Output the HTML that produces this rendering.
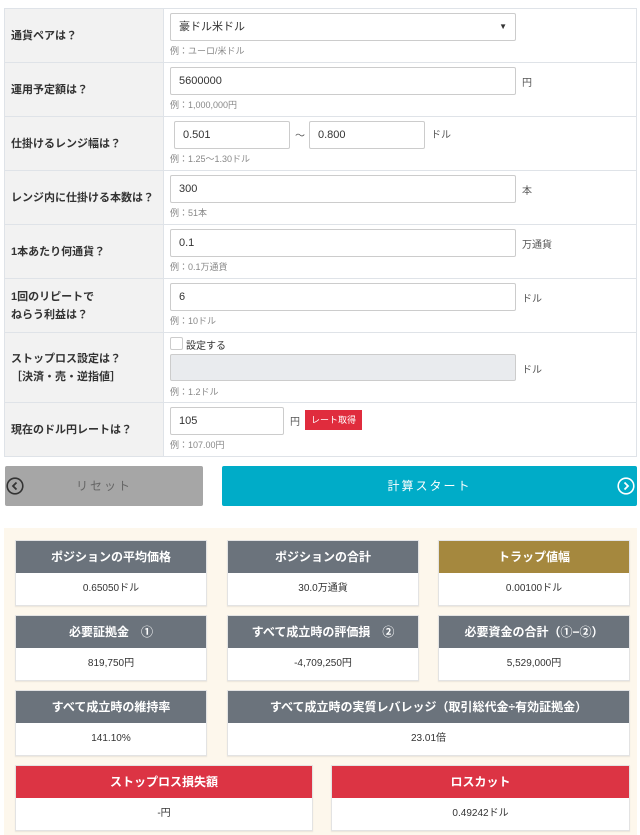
<!DOCTYPE html>
<html><head><meta charset="utf-8"><style>
*{box-sizing:border-box;margin:0;padding:0}
body{width:640px;height:835px;background:#fff;font-family:"Liberation Sans","Noto Sans CJK JP",sans-serif;color:#333;position:relative;overflow:hidden}
.a{position:absolute}
.row{position:absolute;left:4px;width:633px;border:1px solid #dfe3e8;border-bottom:none}
.lab{position:absolute;left:0;top:0;bottom:0;width:159px;background:#f2f2f2;border-right:1px solid #dfe3e8;font-size:11px;font-weight:bold;color:#333;padding-left:6px;display:flex;align-items:center;line-height:18px}
.inp{position:absolute;height:28px;border:1px solid #ccc;border-radius:2px;background:#fff;font-size:11px;padding-left:8px;line-height:26px;color:#333}
.hint{position:absolute;font-size:9px;color:#888}
.unit{position:absolute;font-size:10px;color:#555}
.bx{position:absolute;border:1px solid #e3e3e3;background:#fff;box-shadow:0 1px 1px rgba(0,0,0,.08)}
.bh{height:32px;background:#6b737c;color:#fff;font-weight:bold;font-size:12px;text-align:center;line-height:32px}
.bv{height:32px;font-size:10px;text-align:center;line-height:32px;color:#333}
</style></head><body>
<div class="row" style="top:8px;height:54px"><div class="lab">通貨ペアは？</div></div>
<div class="row" style="top:62px;height:54px"><div class="lab">運用予定額は？</div></div>
<div class="row" style="top:116px;height:54px"><div class="lab">仕掛けるレンジ幅は？</div></div>
<div class="row" style="top:170px;height:54px"><div class="lab">レンジ内に仕掛ける本数は？</div></div>
<div class="row" style="top:224px;height:54px"><div class="lab">1本あたり何通貨？</div></div>
<div class="row" style="top:278px;height:54px"><div class="lab">1回のリピートで<br>ねらう利益は？</div></div>
<div class="row" style="top:332px;height:70px"><div class="lab">ストップロス設定は？<br>［決済・売・逆指値］</div></div>
<div class="row" style="top:402px;height:55px;border-bottom:1px solid #dfe3e8"><div class="lab">現在のドル円レートは？</div></div>

<div class="inp" style="left:170px;top:13px;width:346px">豪ドル米ドル<span style="position:absolute;right:8px;font-size:8px">▼</span></div>
<div class="hint" style="left:170px;top:44px">例：ユーロ/米ドル</div>
<div class="inp" style="left:170px;top:67px;width:346px">5600000</div><div class="unit" style="left:522px;top:74px">円</div>
<div class="hint" style="left:170px;top:98px">例：1,000,000円</div>
<div class="inp" style="left:174px;top:121px;width:116px">0.501</div><div class="unit" style="left:295px;top:127px">〜</div>
<div class="inp" style="left:309px;top:121px;width:116px">0.800</div><div class="unit" style="left:431px;top:126px">ドル</div>
<div class="hint" style="left:170px;top:152px">例：1.25〜1.30ドル</div>
<div class="inp" style="left:170px;top:175px;width:346px">300</div><div class="unit" style="left:522px;top:182px">本</div>
<div class="hint" style="left:170px;top:206px">例：51本</div>
<div class="inp" style="left:170px;top:229px;width:346px">0.1</div><div class="unit" style="left:522px;top:236px">万通貨</div>
<div class="hint" style="left:170px;top:260px">例：0.1万通貨</div>
<div class="inp" style="left:170px;top:283px;width:346px">6</div><div class="unit" style="left:522px;top:290px">ドル</div>
<div class="hint" style="left:170px;top:314px">例：10ドル</div>
<div class="a" style="left:170px;top:337px;width:13px;height:13px;border:1px solid #ccc;border-radius:2px"></div>
<div class="a" style="left:186px;top:337px;font-size:10px">設定する</div>
<div class="inp" style="left:170px;top:354px;width:346px;background:#e9ebee;height:27px"></div><div class="unit" style="left:522px;top:361px">ドル</div>
<div class="hint" style="left:170px;top:385px">例：1.2ドル</div>
<div class="inp" style="left:170px;top:407px;width:114px">105</div><div class="unit" style="left:290px;top:413px">円</div>
<div class="a" style="left:305px;top:410px;width:57px;height:20px;background:#e02c3d;color:#fff;font-size:9px;text-align:center;line-height:20px">レート取得</div>
<div class="hint" style="left:170px;top:438px">例：107.00円</div>

<div class="a" style="left:5px;top:466px;width:198px;height:40px;background:#a6a6a6;border-radius:2px;color:#666;font-size:12px;text-align:center;line-height:40px;letter-spacing:2px">リセット
<svg class="a" style="left:1px;top:11px" width="18" height="18" viewBox="0 0 18 18"><circle cx="9" cy="9" r="7.8" fill="none" stroke="#333" stroke-width="1.6"/><path d="M10.5 5.5 L7 9 L10.5 12.5" fill="none" stroke="#333" stroke-width="1.8"/></svg></div>
<div class="a" style="left:222px;top:466px;width:415px;height:40px;background:#00acc8;border-radius:2px;color:#fff;font-size:12px;text-align:center;line-height:40px;letter-spacing:2px">計算スタート
<svg class="a" style="left:395px;top:11px" width="18" height="18" viewBox="0 0 18 18"><circle cx="9" cy="9" r="7.8" fill="none" stroke="#fff" stroke-width="1.6"/><path d="M7.5 5.5 L11 9 L7.5 12.5" fill="none" stroke="#fff" stroke-width="1.8"/></svg></div>

<div class="a" style="left:4px;top:528px;width:633px;height:307px;background:#fdf7ec"></div>
<div class="bx" style="left:15px;top:540px;width:192px"><div class="bh">ポジションの平均価格</div><div class="bv">0.65050ドル</div></div>
<div class="bx" style="left:227px;top:540px;width:192px"><div class="bh">ポジションの合計</div><div class="bv">30.0万通貨</div></div>
<div class="bx" style="left:438px;top:540px;width:192px"><div class="bh" style="background:#a5883e">トラップ値幅</div><div class="bv">0.00100ドル</div></div>
<div class="bx" style="left:15px;top:615px;width:192px"><div class="bh">必要証拠金　①</div><div class="bv">819,750円</div></div>
<div class="bx" style="left:227px;top:615px;width:192px"><div class="bh">すべて成立時の評価損　②</div><div class="bv">-4,709,250円</div></div>
<div class="bx" style="left:438px;top:615px;width:192px"><div class="bh">必要資金の合計（①−②）</div><div class="bv">5,529,000円</div></div>
<div class="bx" style="left:15px;top:690px;width:192px"><div class="bh">すべて成立時の維持率</div><div class="bv">141.10%</div></div>
<div class="bx" style="left:227px;top:690px;width:403px"><div class="bh">すべて成立時の実質レバレッジ（取引総代金÷有効証拠金）</div><div class="bv">23.01倍</div></div>
<div class="bx" style="left:15px;top:765px;width:298px"><div class="bh" style="background:#dc3444">ストップロス損失額</div><div class="bv">-円</div></div>
<div class="bx" style="left:331px;top:765px;width:299px"><div class="bh" style="background:#dc3444">ロスカット</div><div class="bv">0.49242ドル</div></div>
</body></html>
